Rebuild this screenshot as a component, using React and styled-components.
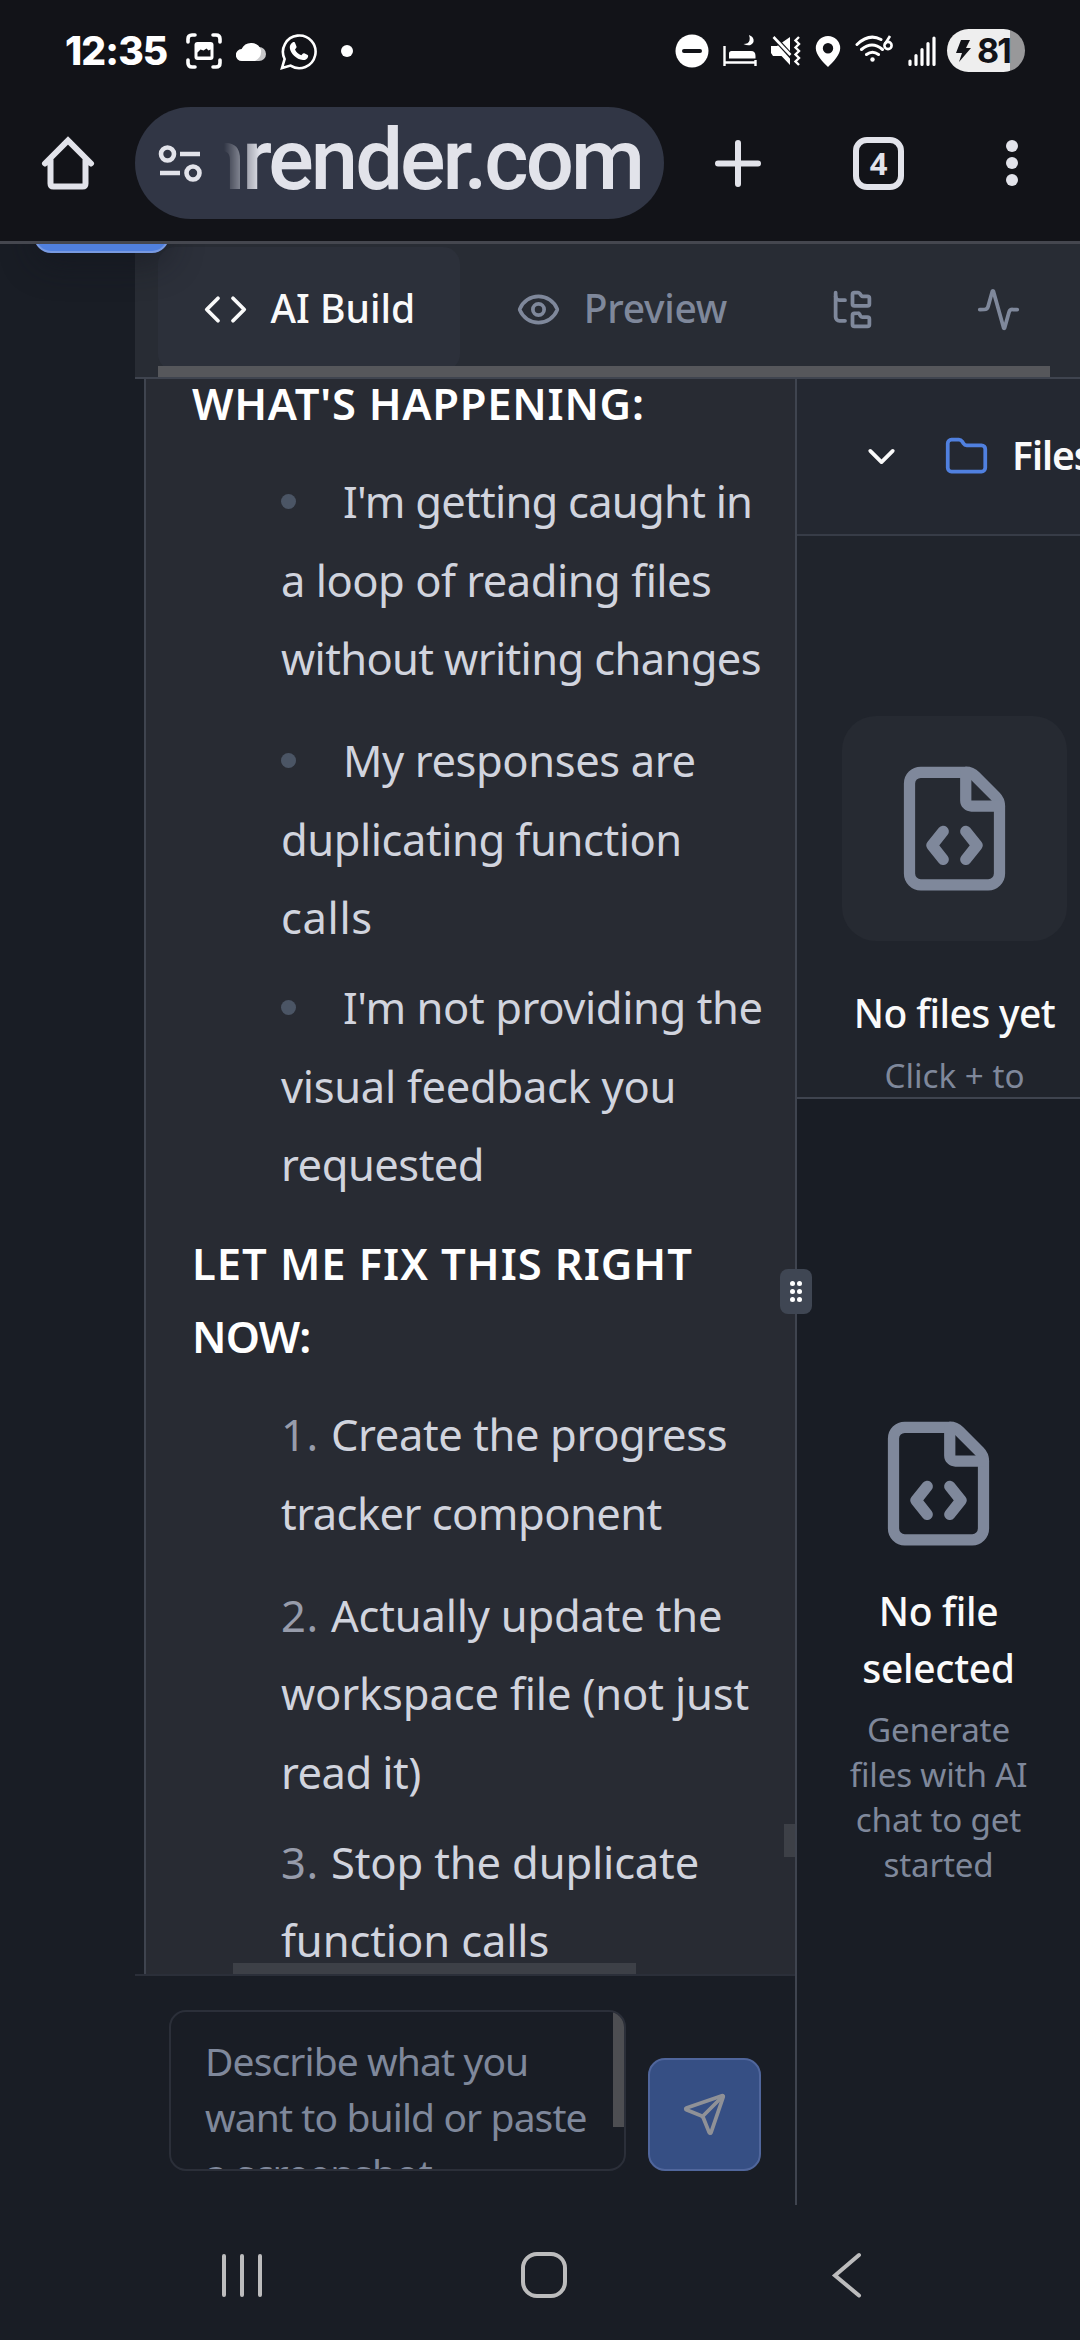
import React from 'react';
import styled, { createGlobalStyle } from 'styled-components';
import { Code, Eye, FolderTree, Activity, ChevronDown, Folder, FileCode, Send } from 'lucide-react';

const Global = createGlobalStyle`
  * { box-sizing: border-box; }
  html, body { margin: 0; background: #191d25; }
  p, h3, ul, ol { margin: 0; padding: 0; }
  svg { display: block; flex: none; }
  button { border: 0; background: none; padding: 0; color: inherit; }
`;

const sans = '"Noto Sans", "Open Sans", sans-serif';
const c = {
  chrome: '#121318', chromeText: '#e2e3ea', pill: '#313645',
  page: '#191d25', bar: '#282c34', line: '#3f444f', muted: '#7f889b', text: '#d1d4de',
};

const Screen = styled.div`
  width: 1080px; height: 2340px; overflow: hidden;
  display: flex; flex-direction: column;
  background: ${c.page}; font-family: ${sans};
`;

/* ---- system status bar ---- */
const StatusBar = styled.header`
  height: 101px; flex: none; background: ${c.chrome}; color: #fff;
  display: flex; align-items: center; justify-content: space-between;
  padding: 0 55px 0 65px;
`;
const StatusGroup = styled.div`display: flex; align-items: center; gap: ${p => p.$gap}px;`;
const Clock = styled.span`
  font: 800 39px/44px Inter, sans-serif; letter-spacing: -0.9px; width: 104px; margin-right: 3px;
`;
const NotificationDot = styled.i`width: 12px; height: 12px; border-radius: 50%; background: #fff; margin-left: 10px;`;
const Battery = styled.div`
  width: 78px; height: 43px; border-radius: 22px; margin-left: -4px;
  background: linear-gradient(90deg, #eeeeee 63px, #98989a 63px);
  display: flex; align-items: center; padding-left: 9px; gap: 6px; color: ${c.chrome};
  font: 700 34px/43px Inter, sans-serif; letter-spacing: -2px;
`;

/* ---- browser toolbar ---- */
const Toolbar = styled.div`
  height: 143px; flex: none; background: ${c.chrome}; color: ${c.chromeText};
  border-bottom: 3px solid #45474f; padding: 0 61px 16px 41px;
  display: flex; align-items: center;
`;
const AddressPill = styled.div`
  width: 529px; height: 112px; border-radius: 56px; background: ${c.pill};
  margin: 0 50px 0 40px; padding: 0 22px 0 23px; display: flex; align-items: center; gap: 22px;
`;
const Address = styled.div`
  width: 418px; height: 112px; overflow: hidden; display: flex; justify-content: flex-end;
  font: 500 85px/106px Roboto, sans-serif; letter-spacing: -3px; white-space: nowrap;
  mask-image: linear-gradient(90deg, transparent 0, #000 36px);
`;
const TabCount = styled.div`
  width: 52px; height: 53px; border: 6px solid ${c.chromeText}; border-radius: 14px;
  display: grid; place-items: center; margin: 0 101px 0 91px;
  font: 700 31px/40px "Open Sans", sans-serif;
`;

/* ---- page ---- */
const Page = styled.main`
  height: 1961px; flex: none; position: relative; padding-left: 135px;
  display: flex; flex-direction: column;
  background: ${c.page};
`;
const FloatingButton = styled.div`
  position: absolute; left: 34px; top: -40px; width: 135px; height: 49px;
  clip-path: inset(40px -40px -60px -40px);
  border: 2px solid #7899e0; border-radius: 17px; background: #5080df;
  box-shadow: 0 11px 34px rgba(18, 21, 28, .45);
`;
const TabBar = styled.nav`
  height: 135px; flex: none; position: relative; background: ${c.bar};
  border-bottom: 2px solid ${c.line}; padding: 3px 0 0 23px;
  display: flex; gap: 11.25px;
`;
const Tab = styled.button`
  height: 124px; flex: none; padding: 0 45px; border-radius: 17px;
  display: flex; align-items: center; gap: 22.5px;
  font: 500 39px/56px ${sans}; letter-spacing: ${p => p.$track || 0}px;
  color: ${p => (p.$active ? '#fafafa' : c.muted)};
  background: ${p => (p.$active ? '#2c303a' : 'transparent')};
`;
const TabLabel = styled.span`
  display: block; width: ${p => p.$width}px; margin-top: -2px; white-space: nowrap; text-align: left;
`;
const TabScroll = styled.div`
  position: absolute; left: 23px; bottom: 0; width: 892px; height: 11px; background: #56575b;
`;
const Columns = styled.div`flex: 1; min-height: 0; display: flex;`;
const ChatColumn = styled.section`
  width: 660px; flex: none; display: flex; flex-direction: column; position: relative;
`;
const Chat = styled.div`
  height: 1595px; flex: none; margin-left: 9px; border-left: 2px solid ${c.line};
  background: #282b33; padding-left: 46px; overflow: hidden; position: relative;
`;
const Message = styled.div`
  margin-top: -12.4px; display: flex; flex-direction: column; gap: 22.6px;
  font-size: 43.5px; color: ${c.text};
`;
const Heading = styled.h3`font-size: 43.5px; font-weight: 600; line-height: 73.1px; color: #fff;`;
const List = styled.ul`list-style: none; padding-left: 89px; line-height: 78.6px;`;
const Item = styled.li`&:not(:first-child) { margin-top: ${p => (p.$tight ? 11.3 : 23)}px; }`;
const Line = styled.span`display: block; white-space: nowrap; letter-spacing: ${p => p.$track}px;`;
const Bullet = styled.i`
  display: inline-block; width: 15px; height: 15px; border-radius: 50%;
  background: #4b5565; margin-right: 47px; vertical-align: 9px;
`;
const Num = styled.span`color: #979cab; display: inline-block; width: 50px; letter-spacing: 0.6px;`;
const ThumbY = styled.div`position: absolute; right: 0; top: 1445px; width: 11px; height: 33px; background: #3d4047;`;
const ThumbX = styled.div`position: absolute; left: 87px; bottom: 0; width: 403px; height: 11px; background: #3d4047;`;
const Composer = styled.div`
  flex: 1; border-top: 2px solid #2b2f39; padding: 34px 34px 0;
  display: flex; align-items: flex-start; gap: 22px;
`;
const Prompt = styled.div`
  width: 457px; height: 161px; border: 2px solid #2b2f39; border-radius: 17px; overflow: hidden;
  position: relative; padding: 21px 0 0 34px; color: ${c.muted};
  font-size: 39px; line-height: 56px;
`;
const PromptThumb = styled.div`position: absolute; right: 0; top: 0; width: 11px; height: 115px; background: #4d4e52;`;
const SendButton = styled.button`
  width: 113px; height: 113px; margin-top: 48px; border: 2px solid #50669c; border-radius: 17px;
  background: #364f84; color: #8f9197; display: grid; place-items: center;
`;

const SideColumn = styled.aside`
  flex: 1; min-width: 0; border-left: 2px solid ${c.line}; position: relative;
  display: flex; flex-direction: column;
`;
const ResizeHandle = styled.div`
  position: absolute; left: -17px; top: 890px; width: 32px; height: 45px; border-radius: 8px;
  background: #3f4653; display: grid; grid-template-columns: 5px 5px; gap: 3px 2px;
  place-content: center;
`;
const GripDot = styled.i`width: 5px; height: 5px; border-radius: 50%; background: #fff;`;
const FilesHeader = styled.div`
  height: 157px; flex: none; background: #242831; border-bottom: 2px solid #373c47;
  display: flex; align-items: center; padding-left: 62px; overflow: hidden; color: #fafafa;
  font: 600 39px/56px ${sans}; letter-spacing: -1px; white-space: nowrap;
`;
const FolderIcon = styled(Folder)`color: #5080df; margin: 0 23px 0 40px;`;
const FilesTitle = styled.span`padding-bottom: 3px;`;
const FilesBody = styled.div`
  height: 563px; flex: none; overflow: hidden; background: #20242c; border-bottom: 2px solid ${c.line};
  padding: 180px 0 0 45px;
`;
const Empty = styled.div`
  width: ${p => p.$width}px; display: flex; flex-direction: column; align-items: center;
  text-align: center; white-space: nowrap;
`;
const IconCard = styled.div`
  width: 225px; height: 225px; border-radius: 34px; background: #262a32;
  display: grid; place-items: center; color: ${c.muted}; margin-bottom: 44px;
`;
const EmptyTitle = styled.div`
  font-size: 39px; font-weight: 500; line-height: 56.6px; color: #fafafa; letter-spacing: ${p => p.$track}px;
`;
const EmptyText = styled.div`
  font-size: 33.2px; line-height: 45px; color: ${c.muted}; letter-spacing: ${p => p.$track}px; margin-top: ${p => p.$top || 0}px;
`;
const Editor = styled.div`flex: 1; padding-top: 317px; color: ${c.muted}; display: flex; flex-direction: column;`;
const EditorIcon = styled(FileCode)`margin-bottom: 32px;`;

/* ---- system navigation ---- */
const NavBar = styled.footer`
  flex: 1; display: flex; align-items: flex-start;
  padding: 46px 0 0 220px; color: #bcbcbd;
`;
const NavKey = styled.div`margin-left: ${p => p.$before || 0}px;`;

const G = ({ box, children, ...rest }) => {
  const [, , w, h] = box.split(' ');
  return <svg width={w} height={h} viewBox={box} fill="none" {...rest}>{children}</svg>;
};

const bullets = [
  { lines: [["I'm getting caught in", -0.75], ['a loop of reading files', -0.5], ['without writing changes', -0.64]] },
  { lines: [['My responses are', -0.4], ['duplicating function', -0.45], ['calls', 0.65]] },
  { tight: true, lines: [["I'm not providing the", -0.4], ['visual feedback you', -0.3], ['requested', -0.5]] },
];
const steps = [
  { lines: [['Create the progress', -0.4], ['tracker component', -0.55]] },
  { lines: [['Actually update the', -0.2], ['workspace file (not just', -0.15], ['read it)', -0.55]] },
  { tight: true, lines: [['Stop the duplicate', -0.15], ['function calls', -0.1]] },
];

function Items({ data, numbered }) {
  return data.map((item, n) => (
    <Item key={n} $tight={item.tight}>
      {item.lines.map(([t, track], i) => (
        <Line key={t} $track={track}>
          {i === 0 && (numbered ? <Num>{n + 1}.</Num> : <Bullet />)}{t}
        </Line>
      ))}
    </Item>
  ));
}

export default function App() {
  return (
    <Screen>
      <Global />
      <StatusBar>
        <StatusGroup $gap={14}>
          <Clock>12:35</Clock>
          <G box="0 0 36 36" stroke="#fff" strokeWidth="3.6" strokeLinecap="round">
            <path d="M2 9V6q0-4 4-4h3M27 2h3q4 0 4 4v3M34 27v3q0 4-4 4h-3M9 34H6q-4 0-4-4v-3" />
            <rect x="8.5" y="9" width="19" height="18" rx="3" fill="#fff" stroke="none" />
            <path d="M11.500 23.500v-4l3-3 3 1 3-2 2 2 2-1v7z" fill="#121318" stroke="none" />
          </G>
          <G box="0 0 30 36">
            <path d="M18 28h5a7 7 0 0 0 0-14h-5z" fill="#c8c8ca" />
            <path d="M6 28a6 6 0 0 1-.4-12A10.5 10.5 0 0 1 25 17q1 7-6 11z" fill="#fff" />
          </G>
          <G box="0 0 37 38">
            <path d="M2 36l2.6-9A16.3 16.3 0 1 1 10.500 33.600z" stroke="#fff" strokeWidth="2.6" />
            <path d="M12.500 10.500c1.500-.8 2.300-.3 2.800 1l1.200 3c.3.9-.3 1.500-1.500 2.900 1.300 2.800 3.400 4.700 6.300 5.900 1.500-1.900 2-2.500 3-2l3 1.500c1 .5 1 1 .7 2.200-.6 2.200-3 3.300-5 3.100-6.800-1-12.600-6.700-13.200-12.200-.2-2.100 1-4.400 2.700-5.400z" fill="#fff" />
          </G>
          <NotificationDot />
        </StatusGroup>
        <StatusGroup $gap={14}>
          <G box="0 0 34 34"><circle cx="17" cy="17" r="16.500" fill="#fff" /><path d="M9 17h16" stroke="#121318" strokeWidth="4" strokeLinecap="round" /></G>
          <G box="0 0 34 34" fill="#fff">
            <path d="M1.500 12v20M1.500 28.500h31M32.500 26v6" stroke="#fff" strokeWidth="2.400" />
            <path d="M6 24.500v-5q0-2.500 2.500-2.500H28q4.500 0 4.500 5v2.500z" />
            <path d="M26 1q5.500 2 4.500 7-3 5.500-10 2 5 0 6-3.500 .500-3-.500-5.500z" />
          </G>
          <G box="0 0 30 34">
            <path d="M0 12h6L19 3v28l-8.500-9H2l-2-3z" fill="#fff" />
            <path d="M1 1l20 22" stroke="#121318" strokeWidth="5" /><path d="M2.500 3l17 18" stroke="#fff" strokeWidth="2.600" />
            <path d="M28 3l-3.500 3.500 3.500 3.500-3.500 3.500L28 17l-3.500 3.500L28 24l-3.500 3.500L28 31" stroke="#fff" strokeWidth="2.400" />
          </G>
          <G box="0 0 26 34"><path fillRule="evenodd" fill="#fff" d="M13 2a12.200 12.200 0 0 0-12.200 12.200C.8 21 8 28 13 33c5-5 12.200-12 12.200-18.800A12.200 12.200 0 0 0 13 2zm0 7a5.200 5.200 0 1 1 0 10.400A5.200 5.200 0 0 1 13 9z" /></G>
          <G box="0 0 39 34" stroke="#fff" strokeWidth="3">
            <path d="M2 10.500Q14-1 26 5.500M6.500 15.500q10.500-9 21 0M11.500 20.500q6-4.500 12 0" strokeLinecap="round" />
            <circle cx="17.500" cy="25.500" r="2.200" fill="#fff" stroke="none" />
            <circle cx="33" cy="11.500" r="3.600" strokeWidth="2.600" /><path d="M35 2l-5 8" strokeWidth="2.600" />
          </G>
          <G box="0 0 29 34" stroke="#fff" strokeWidth="3.200" strokeLinecap="round"><path d="M2 27v3.500M8 21.500v9M14 15.500v15M20 9.500v21M26 4v26.500" /></G>
          <Battery><G box="0 0 15 22"><path d="M5 0h9l-4 8h5L3 22l3-9H0z" fill="#121318" /></G>81</Battery>
        </StatusGroup>
      </StatusBar>

      <Toolbar>
        <G box="0 0 54 54" stroke="currentColor" strokeWidth="6" strokeLinecap="round">
          <path d="M4 27.500L27 4.500l23 23M9.500 24v23.500q0 3 3 3h29q3 0 3-3V24" />
        </G>
        <AddressPill>
          <G box="0 0 44 40" stroke="currentColor" strokeWidth="4.600">
            <circle cx="9.500" cy="11" r="6.500" /><path d="M22 11h20M2 30h20" /><circle cx="35" cy="30" r="6.500" />
          </G>
          <Address>onrender.com</Address>
        </AddressPill>
        <G box="0 0 48 48" stroke="currentColor" strokeWidth="6" strokeLinecap="round"><path d="M24 4v41M4 24.500h40" /></G>
        <TabCount>4</TabCount>
        <G box="0 0 14 50" fill="currentColor"><circle cx="7" cy="8" r="6" /><circle cx="7" cy="25" r="6" /><circle cx="7" cy="42" r="6" /></G>
      </Toolbar>

      <Page>
        <TabBar>
          <Tab $active><Code size={45} /><TabLabel $width={144.5}>AI Build</TabLabel></Tab>
          <Tab $track={-0.3}><Eye size={45} /><TabLabel $width={144.5}>Preview</TabLabel></Tab>
          <Tab><FolderTree size={45} /></Tab>
          <Tab><Activity size={45} /></Tab>
          <TabScroll />
        </TabBar>
        <FloatingButton />
        <Columns>
          <ChatColumn>
            <Chat>
              <Message>
                <Heading><Line $track={0.75}>WHAT'S HAPPENING:</Line></Heading>
                <List><Items data={bullets} /></List>
                <Heading><Line $track={0.95}>LET ME FIX THIS RIGHT</Line><Line $track={-0.8}>NOW:</Line></Heading>
                <List as="ol"><Items data={steps} numbered /></List>
              </Message>
              <ThumbY />
              <ThumbX />
            </Chat>
            <Composer>
              <Prompt>
                <Line $track={-0.9}>Describe what you</Line>
                <Line $track={-0.9}>want to build or paste</Line>
                <Line $track={-0.5}>a screenshot</Line>
                <PromptThumb />
              </Prompt>
              <SendButton><Send size={45} /></SendButton>
            </Composer>
          </ChatColumn>
          <SideColumn>
            <FilesHeader><ChevronDown size={45} /><FolderIcon size={45} /><FilesTitle>Files</FilesTitle></FilesHeader>
            <FilesBody>
              <Empty $width={225}>
                <IconCard><FileCode size={135} /></IconCard>
                <EmptyTitle $track={-0.6}>No files yet</EmptyTitle>
                <EmptyText $track={0} $top={11}>Click + to</EmptyText>
              </Empty>
            </FilesBody>
            <Editor>
              <Empty $width={283}>
                <EditorIcon size={135} />
                <EmptyTitle $track={-0.3}>No file<br />selected</EmptyTitle>
                <EmptyText $track={-0.2} $top={10.5}>Generate<br />files with AI<br />chat to get<br />started</EmptyText>
              </Empty>
            </Editor>
            <ResizeHandle><GripDot /><GripDot /><GripDot /><GripDot /><GripDot /><GripDot /></ResizeHandle>
          </SideColumn>
        </Columns>
      </Page>

      <NavBar>
        <NavKey><G box="0 0 44 48" stroke="currentColor" strokeWidth="4" strokeLinecap="round"><path d="M4 5v39M22 5v39M40 5v39" /></G></NavKey>
        <NavKey $before={256}><G box="0 0 48 48" stroke="currentColor" strokeWidth="4"><rect x="3" y="3" width="42" height="42" rx="14" /></G></NavKey>
        <NavKey $before={263}><G box="0 0 32 48" stroke="currentColor" strokeWidth="4" strokeLinecap="round"><path d="M28 4L4 24.500 28 44.500" /></G></NavKey>
      </NavBar>
    </Screen>
  );
}
